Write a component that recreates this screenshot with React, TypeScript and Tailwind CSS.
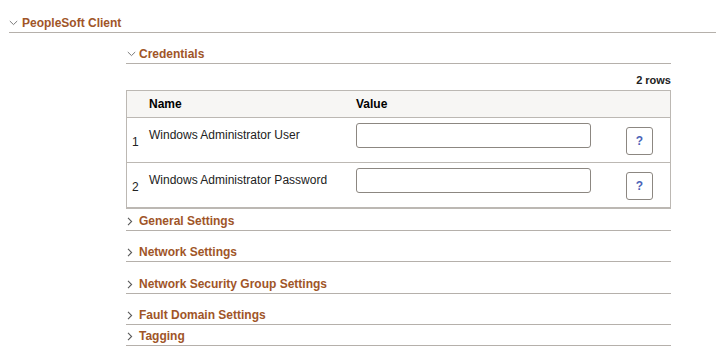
import React from 'react'

const font = { fontFamily: '"Liberation Sans", Arial, sans-serif' }

function Down() {
    return (
        <svg width="9" height="6" viewBox="0 0 9 6" className="shrink-0">
            <path d="M0.8 1 L4.5 4.6 L8.2 1" fill="none" stroke="#7a7a7a" strokeWidth="1" />
        </svg>
    )
}

function Right() {
    return (
        <svg width="6" height="9" viewBox="0 0 6 9" className="shrink-0">
            <path d="M1 0.8 L4.6 4.5 L1 8.2" fill="none" stroke="#5a5a5a" strokeWidth="1.1" />
        </svg>
    )
}

function Collapsed({ title, className }: { title: string; className: string }) {
    return (
        <div className={`flex h-[21px] items-center border-b border-[#b5b0ab] pt-[2px] pl-[1px] ${className}`}>
            <Right />
            <span className="ml-[6px] text-[12px] font-bold text-[#a05528]">{title}</span>
        </div>
    )
}

const rows = ['Windows Administrator User', 'Windows Administrator Password']

export default function App() {
    return (
        <div className="h-[350px] w-[716px] bg-white text-[#222]" style={font}>
            <div className="pt-[12px] pl-[9px]">
                {/* main group */}
                <div className="flex h-[21px] items-center border-b border-[#b5b0ab] pt-[2px]">
                    <Down />
                    <span className="ml-[4px] text-[12px] font-bold text-[#a05528]">PeopleSoft Client</span>
                </div>

                <div className="ml-[117px] w-[545px] pt-[10px]">
                    <div className="flex h-[21px] items-center border-b border-[#b5b0ab] pt-[2px] pl-[1px]">
                        <Down />
                        <span className="ml-[3px] text-[12px] font-bold text-[#a05528]">Credentials</span>
                    </div>

                    <div className="mt-[9px] mb-[3px] h-[14px] text-right text-[11px] leading-[14px] font-bold text-[#222]">2 rows</div>

                    <div className="border border-b-2 border-[#bcb8b3]">
                        <div className="flex h-[27px] items-center border-b border-[#bcb8b3] bg-[#f7f6f4] text-[12px] font-bold text-black">
                            <span className="ml-[22px] w-[207px]">Name</span>
                            <span>Value</span>
                        </div>
                        {rows.map((r, i) => (
                            <div
                                key={r}
                                className={`flex items-start pt-[5px] text-[12px] ${i === 0 ? 'h-[45px] border-b border-[#bcb8b3]' : 'h-[44px]'}`}
                            >
                                <span className="mt-[12px] w-[22px] pl-[5px] leading-[14px]">{i + 1}</span>
                                <span className="mt-[5px] w-[207px] leading-[14px]">{r}</span>
                                <div className="h-[25px] w-[235px] rounded-[3px] border border-[#8c8781] bg-white" />
                                <button className="mt-[4px] ml-[35px] flex h-[28px] w-[27px] items-center justify-center rounded-[3px] border border-[#8c8781] bg-white text-[12px] font-bold text-[#4a63b8]">
                                    ?
                                </button>
                            </div>
                        ))}
                    </div>

                    <Collapsed title="General Settings" className="mt-[1px]" />
                    <Collapsed title="Network Settings" className="mt-[10px]" />
                    <Collapsed title="Network Security Group Settings" className="mt-[11px]" />
                    <Collapsed title="Fault Domain Settings" className="mt-[10px]" />
                    <Collapsed title="Tagging" className="mt-0" />
                </div>
            </div>
        </div>
    )
}
